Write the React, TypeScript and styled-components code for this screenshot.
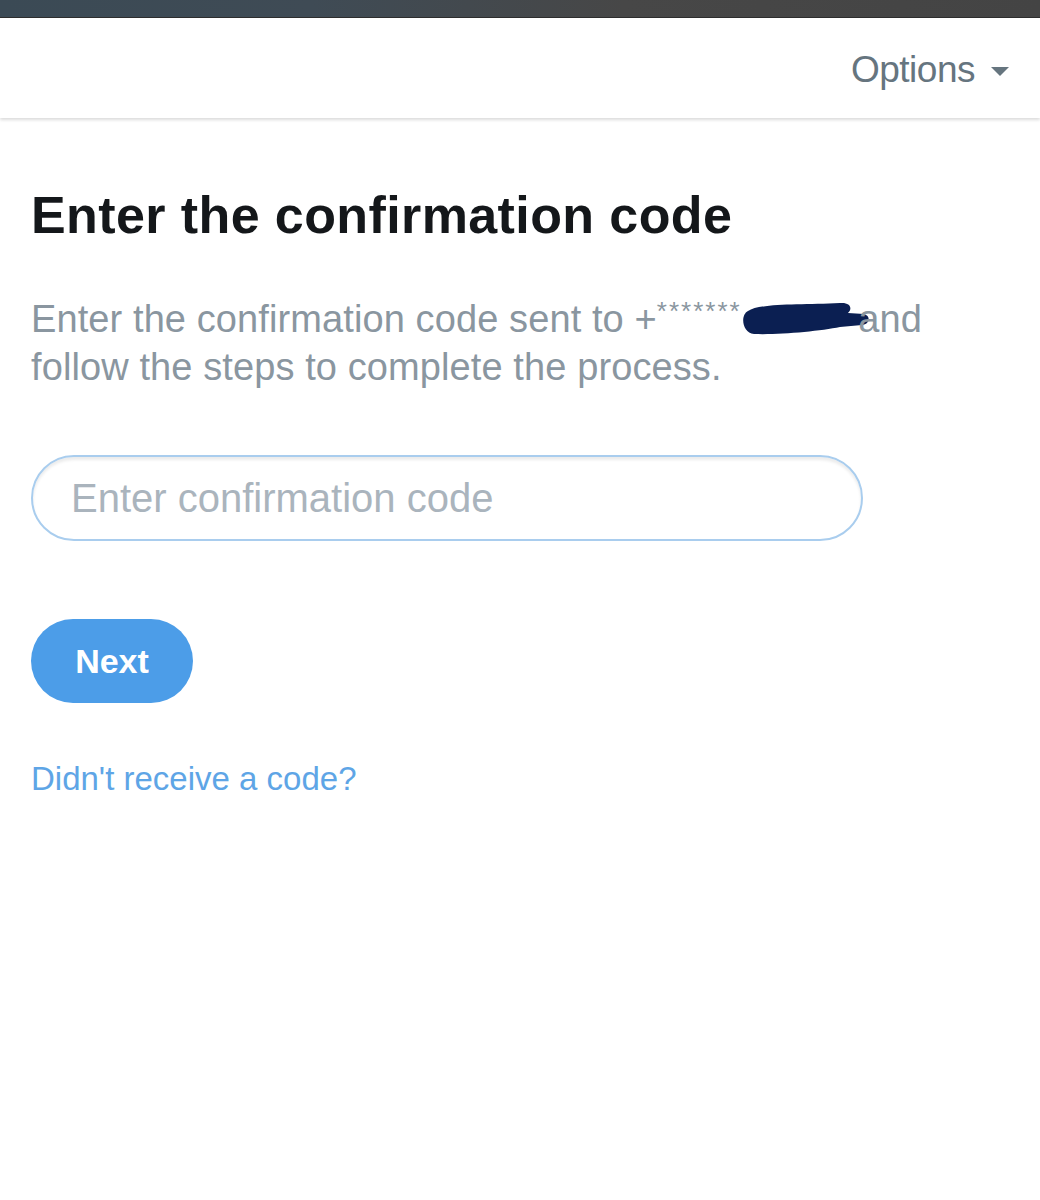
import React from "react";
import styled, { createGlobalStyle } from "styled-components";

const Global = createGlobalStyle`
  html, body { margin: 0; padding: 0; background: #ffffff; }
  body { font-family: "Liberation Sans", Arial, sans-serif; }
`;

const Page = styled.div`
  width: 1040px;
  min-height: 1200px;
  background: #ffffff;
  display: flex;
  flex-direction: column;
`;

const TopStrip = styled.div`
  height: 17px;
  background: linear-gradient(90deg, #3b4a55 0%, #3f4b55 30%, #474747 60%, #444444 100%);
  border-bottom: 1px solid #2e2e2e;
`;

const Header = styled.header`
  height: 100px;
  display: flex;
  align-items: center;
  justify-content: flex-end;
  padding: 0 31px 0 0;
  box-shadow: 0 2px 3px rgba(0, 0, 0, 0.14);
  position: relative;
  z-index: 1;
`;

const OptionsButton = styled.button`
  display: flex;
  align-items: center;
  gap: 16px;
  background: none;
  border: none;
  padding: 0;
  font-family: "Liberation Sans", Arial, sans-serif;
  font-size: 37px;
  color: #66757f;
  letter-spacing: -0.5px;
  margin-top: 4px;
`;

const Caret = styled.span`
  width: 0;
  height: 0;
  border-left: 9px solid transparent;
  border-right: 9px solid transparent;
  border-top: 9px solid #66757f;
  margin-top: 2px;
`;

const Main = styled.main`
  display: flex;
  flex-direction: column;
  align-items: flex-start;
  padding: 67px 0 0 31px;
`;

const Title = styled.h1`
  margin: 0;
  font-family: "Liberation Sans", Arial, sans-serif;
  font-weight: 700;
  font-size: 52px;
  line-height: 60px;
  color: #14171a;
  letter-spacing: 0.4px;
`;

const Description = styled.p`
  margin: 42px 0 0;
  font-size: 38px;
  line-height: 48px;
  color: #8a96a0;
  width: 900px;
  letter-spacing: 0.1px;
`;

const Stars = styled.span`
  font-size: 26px;
  vertical-align: 12px;
  letter-spacing: 2px;
`;

const Redaction = styled.svg`
  display: inline-block;
  width: 130px;
  height: 34px;
  vertical-align: -3px;
  margin: 0 -22px 0 -2px;
`;

const CodeInput = styled.input`
  margin-top: 64px;
  width: 832px;
  height: 86px;
  box-sizing: border-box;
  border: 2px solid #a9cdee;
  border-radius: 43px;
  padding: 0 38px;
  font-family: "Liberation Sans", Arial, sans-serif;
  font-size: 40px;
  color: #14171a;
  outline: none;
  box-shadow: inset 0 3px 3px rgba(0, 0, 0, 0.08);
  &::placeholder { color: #aab4bd; }
`;

const NextButton = styled.button`
  margin-top: 78px;
  width: 162px;
  height: 84px;
  border: none;
  border-radius: 42px;
  background: #4c9de8;
  color: #ffffff;
  font-family: "Liberation Sans", Arial, sans-serif;
  font-weight: 700;
  font-size: 34px;
  padding: 0;
`;

const HelpLink = styled.a`
  margin-top: 57px;
  font-size: 33px;
  color: #5ea5e6;
  text-decoration: none;
`;

export default function App() {
  return (
    <Page>
      <Global />
      <TopStrip />
      <Header>
        <OptionsButton>
          Options
          <Caret />
        </OptionsButton>
      </Header>
      <Main>
        <Title>Enter the confirmation code</Title>
        <Description>
          Enter the confirmation code sent to +<Stars>*******</Stars>
          <Redaction viewBox="0 0 130 34" aria-hidden="true">
            <path
              d="M8 10 C20 2, 60 4, 100 2 C110 1, 113 7, 108 12 L124 13 C131 15, 130 23, 122 24 L100 26 C80 30, 40 34, 14 33 C2 32, 0 14, 8 10 Z"
              fill="#0b1f52"
            />
          </Redaction>{" "}
          and follow the steps to complete the process.
        </Description>
        <CodeInput placeholder="Enter confirmation code" />
        <NextButton>Next</NextButton>
        <HelpLink href="#">Didn't receive a code?</HelpLink>
      </Main>
    </Page>
  );
}
